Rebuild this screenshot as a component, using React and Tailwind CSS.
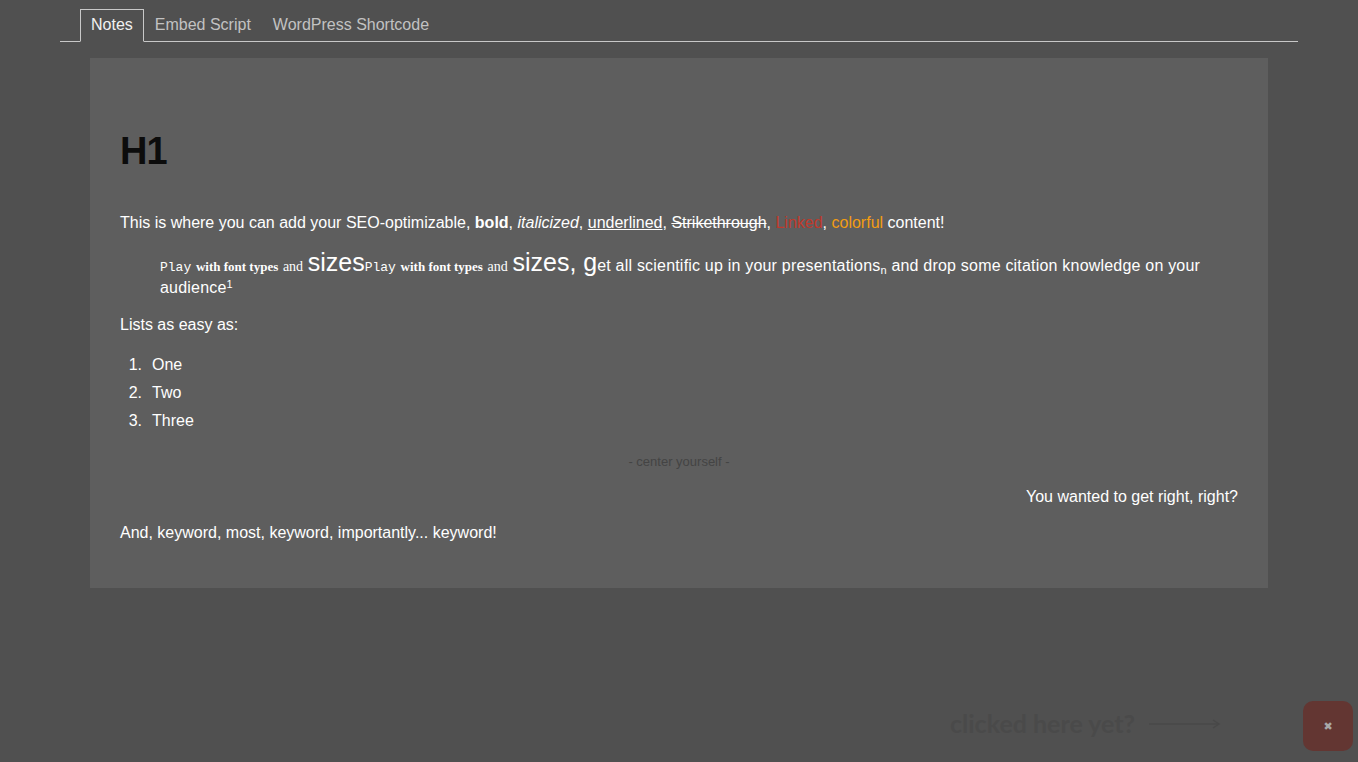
import React from "react";

export default function App() {
  const sans = { fontFamily: '"Liberation Sans", Arial, Helvetica, sans-serif' };
  const serif = { fontFamily: '"Liberation Serif", "Times New Roman", serif' };
  const mono = { fontFamily: '"Liberation Mono", "Courier New", monospace' };
  return (
    <div
      className="relative w-full h-[762px] overflow-hidden bg-[#505050] text-white"
      style={sans}
    >
      {/* Tabs */}
      <div className="pt-[9px] mx-[60px]">
        <ul className="flex border-b border-[#c8c8c8] pl-[20px] h-[33px]">
          <li className="-mb-px h-[33px] px-[10px] border border-[#c8c8c8] border-b-[#505050] bg-[#505050] text-[16px] leading-[29px] text-[#f0f0f0]">
            Notes
          </li>
          <li className="-mb-px h-[33px] px-[10px] border border-transparent text-[16px] leading-[29px] text-[#c2c2c2]">
            Embed Script
          </li>
          <li className="-mb-px h-[33px] px-[10px] border border-transparent text-[16px] leading-[29px] text-[#c2c2c2]">
            WordPress Shortcode
          </li>
        </ul>
      </div>

      {/* Panel */}
      <div className="mx-[90px] mt-[16px] bg-[#5e5e5e] px-[30px] pt-[69px] pb-[44px]">
        <h1 className="text-[38px] leading-[48px] font-bold text-[#0c0c0c] tracking-[-1px]">
          H1
        </h1>

        <p className="mt-[37px] text-[16px] leading-[22px]">
          This is where you can add your SEO-optimizable, <b>bold</b>,{" "}
          <i>italicized</i>, <u>underlined</u>, <s>Strikethrough</s>,{" "}
          <span className="text-[#c0392b]">Linked</span>,{" "}
          <span className="text-[#f39c12]">colorful</span> content!
        </p>

        <div className="mt-[21px] ml-[40px] text-[16px] leading-[22px] tracking-[0.2px]">
          <span className="text-[13px] leading-[0px] tracking-normal" style={mono}>
            Play
          </span>{" "}
          <span className="text-[13px] font-bold leading-[0px] tracking-normal" style={serif}>
            with font types
          </span>{" "}
          <span className="text-[14px] leading-[0px] tracking-normal" style={serif}>
            and
          </span>{" "}
          <span className="text-[25px] leading-[0px] tracking-normal">sizes</span>
          <span className="text-[13px] leading-[0px] tracking-normal" style={mono}>
            Play
          </span>{" "}
          <span className="text-[13px] font-bold leading-[0px] tracking-normal" style={serif}>
            with font types
          </span>{" "}
          <span className="text-[14px] leading-[0px] tracking-normal" style={serif}>
            and
          </span>{" "}
          <span className="text-[25px] leading-[0px] tracking-normal">sizes, g</span>et all scientific up in your presentations
          <sub className="text-[11px] leading-[0px]">n</sub> and drop some citation knowledge on your audience
          <sup className="text-[11px] leading-[0px]">1</sup>
        </div>

        <p className="mt-[15px] text-[16px] leading-[22px]">Lists as easy as:</p>

        <ol className="mt-[15px] text-[16px] leading-[28px]">
          <li className="flex"><span className="w-[32px] text-right pr-[10px]">1.</span>One</li>
          <li className="flex"><span className="w-[32px] text-right pr-[10px]">2.</span>Two</li>
          <li className="flex"><span className="w-[32px] text-right pr-[10px]">3.</span>Three</li>
        </ol>

        <p className="mt-[18px] text-center text-[13px] leading-[18px] text-[#444444]">
          - center yourself -
        </p>

        <p className="mt-[15px] text-right text-[16px] leading-[22px]">
          You wanted to get right, right?
        </p>

        <p className="mt-[14px] text-[16px] leading-[22px]">
          And, keyword, most, keyword, importantly... keyword!
        </p>
      </div>

      {/* Faint hint */}
      <div className="absolute left-[950px] top-[706px] flex items-center gap-[14px] text-[#4a4a4a]">
        <span className="text-[25px] font-bold leading-[34px]" style={{ fontFamily: "Lato, sans-serif" }}>
          clicked here yet?
        </span>
        <svg width="72" height="10" viewBox="0 0 72 10" className="mt-[2px]">
          <line x1="0" y1="5" x2="70" y2="5" stroke="#484848" strokeWidth="1.5" />
          <path d="M64 1 L70 5 L64 9" fill="none" stroke="#484848" strokeWidth="1.5" />
        </svg>
      </div>

      {/* Close button */}
      <div className="absolute left-[1303px] top-[701px] w-[50px] h-[50px] rounded-[10px] bg-[#633632] flex items-center justify-center">
        <span className="text-[11px] leading-none text-[#a8a8a8]" style={{ fontFamily: '"DejaVu Sans", sans-serif' }}>
          ✖
        </span>
      </div>
    </div>
  );
}
